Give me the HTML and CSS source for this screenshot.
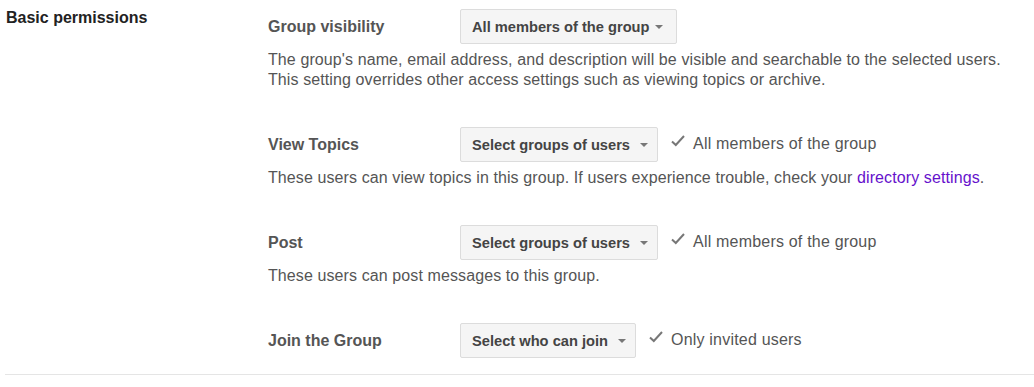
FILE: index.html
```html
<!DOCTYPE html>
<html lang="en">
<head>
    <meta charset="UTF-8">
    <meta name="viewport" content="width=device-width, initial-scale=1.0">
    <title>Basic permissions</title>
    <link rel="stylesheet" href="styles.css">
</head>
<body>
    <div class="section">
        <h2 class="section-title">Basic permissions</h2>

        <div class="settings">
            <div class="setting">
                <div class="setting-row">
                    <div class="setting-label">Group visibility</div>
                    <button class="select-btn select-wide">All members of the group <span class="caret"></span></button>
                </div>
                <p class="setting-desc">The group's name, email address, and description will be visible and searchable to the selected users.<br>This setting overrides other access settings such as viewing topics or archive.</p>
            </div>

            <div class="setting">
                <div class="setting-row">
                    <div class="setting-label">View Topics</div>
                    <button class="select-btn">Select groups of users <span class="caret"></span></button>
                    <div class="selected">
                        <svg class="check" width="14" height="12" viewBox="0 0 14 12"><path d="M1 6.5 L4.8 10 L13 1" fill="none" stroke="#777" stroke-width="2"/></svg>
                        All members of the group
                    </div>
                </div>
                <p class="setting-desc">These users can view topics in this group. If users experience trouble, check your <a href="#">directory settings</a>.</p>
            </div>

            <div class="setting">
                <div class="setting-row">
                    <div class="setting-label">Post</div>
                    <button class="select-btn">Select groups of users <span class="caret"></span></button>
                    <div class="selected">
                        <svg class="check" width="14" height="12" viewBox="0 0 14 12"><path d="M1 6.5 L4.8 10 L13 1" fill="none" stroke="#777" stroke-width="2"/></svg>
                        All members of the group
                    </div>
                </div>
                <p class="setting-desc">These users can post messages to this group.</p>
            </div>

            <div class="setting">
                <div class="setting-row">
                    <div class="setting-label">Join the Group</div>
                    <button class="select-btn">Select who can join <span class="caret"></span></button>
                    <div class="selected">
                        <svg class="check" width="14" height="12" viewBox="0 0 14 12"><path d="M1 6.5 L4.8 10 L13 1" fill="none" stroke="#777" stroke-width="2"/></svg>
                        Only invited users
                    </div>
                </div>
            </div>
        </div>
    </div>
</body>
</html>
```

FILE: styles.css
```css
* {
    margin: 0;
    padding: 0;
    box-sizing: border-box;
}

body {
    font-family: "Liberation Sans", Arial, sans-serif;
    font-size: 16px;
    color: #555;
    background: #fff;
}

/* Section with title column and settings column */
.section {
    display: flex;
    margin-left: 5px;
    padding: 9px 0 16px 1px;
    border-bottom: 1px solid #e5e5e5;
}

.section-title {
    width: 262px;
    flex-shrink: 0;
    font-size: 16px;
    line-height: 18px;
    font-weight: bold;
    color: #222;
}

.settings {
    flex-grow: 1;
}

.setting {
    margin-bottom: 37px;
}

.setting:last-child {
    margin-bottom: 0;
}

.setting-row {
    display: flex;
    align-items: center;
    height: 35px;
}

.setting-label {
    width: 192px;
    flex-shrink: 0;
    font-weight: bold;
    color: #555;
}

/* Dropdown button */
.select-btn {
    display: inline-flex;
    align-items: center;
    height: 35px;
    padding: 0 9px 0 11px;
    font-family: inherit;
    font-size: 14.67px;
    font-weight: bold;
    white-space: nowrap;
    color: #444;
    background: #f5f5f5;
    border: 1px solid #dcdcdc;
    border-radius: 2px;
    cursor: pointer;
}

.select-wide {
    padding-right: 13px;
}

.select-wide .caret {
    margin-left: 5px;
}

.caret {
    display: inline-block;
    margin-left: 10px;
    border-left: 4px solid transparent;
    border-right: 4px solid transparent;
    border-top: 4px solid #777;
}

.selected {
    display: flex;
    align-items: center;
    margin-left: 13px;
    color: #555;
    letter-spacing: 0.2px;
    position: relative;
    top: -1px;
}

.check {
    margin-right: 8px;
    position: relative;
    top: -3px;
}

.setting-desc {
    margin-top: 6px;
    line-height: 20px;
    letter-spacing: 0.1px;
    color: #555;
}

.setting-desc a {
    color: #6611cc;
    text-decoration: none;
}
```
